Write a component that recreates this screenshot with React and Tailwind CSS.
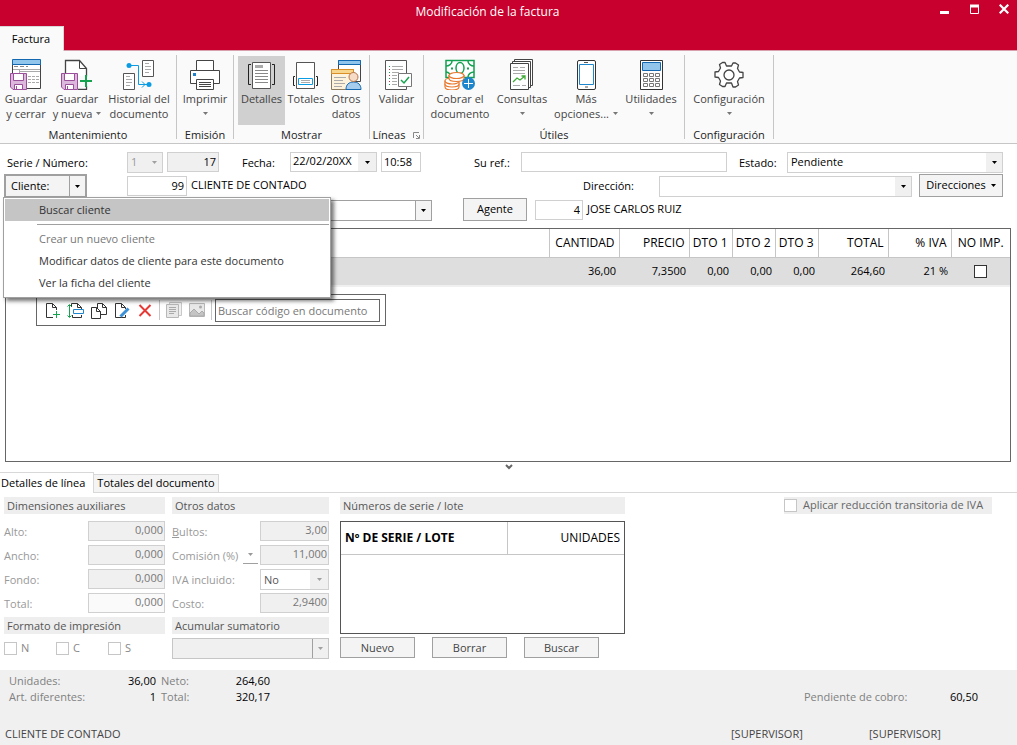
import { useState } from 'react'

/* ---------- shared bits ---------- */

function Caret({ className = 'text-black' }) {
  return (
    <svg className={`w-[5px] h-[3px] shrink-0 ${className}`} viewBox="0 0 5 3" fill="currentColor" aria-hidden="true">
      <path d="M0 0h5L2.5 3z" />
    </svg>
  )
}

function Combo({ label, options = [''], disabled, className = '', caretClass = 'w-4 bg-[#f0f0f0]', selectClass = '' }) {
  return (
    <div className={`relative flex border ${className}`}>
      <select aria-label={label} disabled={disabled}
        className={`flex-1 min-w-0 appearance-none bg-transparent pl-[3px] pr-4 outline-none opacity-100 ${selectClass}`}>
        {options.map((o) => <option key={o}>{o}</option>)}
      </select>
      <span className={`pointer-events-none absolute inset-y-0 right-0 flex items-center justify-center ${caretClass}`}>
        <Caret className={disabled ? 'text-[#a0a0a0]' : 'text-black'} />
      </span>
    </div>
  )
}

function Field({ label, value, className = '', ...rest }) {
  return (
    <input aria-label={label} defaultValue={value}
      className={`h-5 min-w-0 border border-[#d0d0d0] pb-[2px] outline-none ${className}`} {...rest} />
  )
}

/* ---------- ribbon icons ---------- */

function Icon({ children }) {
  return (
    <svg className="w-8 h-8 shrink-0" viewBox="0 0 32 32" fill="none" stroke="#444" aria-hidden="true">
      {children}
    </svg>
  )
}

function Disk() {
  return (
    <g stroke="#9b4f9b">
      <path d="M.5 15.5h16v16H3l-2.500-2.500z" fill="#dcb8dc" />
      <path d="M3.500 15.500h10v7h-10z" fill="#fff" />
      <path d="M4.500 31.500v-5h8v5z" fill="#fff" />
      <path d="M6.500 28v3" />
    </g>
  )
}

const icons = {
  saveClose: (
    <Icon>
      <path d="M2.500 6v24.500h28V6" fill="#fff" />
      <path d="M2.500 1.500h28v5h-28z" fill="#92c5ec" stroke="#1368b0" />
      <path d="M4 8.500h4m2 0h4m2 0h2" stroke="#888" />
      <path d="M3 11.500h27M9.500 11v4M9.500 13.500H30" stroke="#aaa" />
      <path d="M18 18.500h11M18 21.500h11M18 24.500h11" stroke="#aaa" strokeDasharray="3 1" />
      <Disk />
    </Icon>
  ),
  saveNew: (
    <Icon>
      <path d="M4.500 16V2.500h14l7 8v8M25.500 28v3.500H17" fill="#fff" strokeWidth="1.300" />
      <path d="M18.500 2.500v8h7" />
      <Disk />
      <path d="M25 17v12M19 23h12" stroke="#16a34f" strokeWidth="2" />
    </Icon>
  ),
  history: (
    <Icon>
      <path d="M19.500 2.500h11v16h-11zM.5 15.500h11v16H.5z" fill="#fff" stroke="#555" />
      <path d="M22 5.500h4m-4 3h6m-6 3h6m-6 3h4M3 18.500h4m-4 3h6m-6 3h6m-6 3h4" stroke="#aaa" />
      <path d="M6 7.500h9.500v19H25M19 23.500l3 3-3 3" stroke="#0c9ce4" />
      <circle cx="6" cy="7.500" r="2.500" fill="#0c9ce4" stroke="none" />
      <circle cx="26" cy="26.500" r="2.500" fill="#0c9ce4" stroke="none" />
    </Icon>
  ),
  print: (
    <Icon>
      <path d="M7.500 2.500h17v11h-17z" fill="#fff" />
      <path d="M1.500 12.500h29v13h-29z" fill="#fff" />
      <path d="M4 15h3v3H4z" fill="#1e7fcb" stroke="none" />
      <path d="M7.500 21.500h17v10h-17z" fill="#fff" />
      <path d="M10 24.500h12m-12 2h12m-12 2h12" />
    </Icon>
  ),
  details: (
    <Icon>
      <path d="M6.500 4.500h18v26h-18z" fill="#fff" stroke="#555" />
      <path d="M5 6.500H2.500v20H5M26 6.500h2.500v20H26" stroke="#222" />
      <path d="M9 7h8v3H9z" fill="#aaa" stroke="none" />
      <path d="M9 12.500h13m-13 3h13m-13 3h13m-13 3h13m-13 3h13" stroke="#888" />
    </Icon>
  ),
  totals: (
    <Icon>
      <path d="M6.500 4.500h18v26h-18z" fill="#fff" stroke="#555" />
      <path d="M5 18.500H3.500v9H5M26 18.500h1.500v9H26" stroke="#222" />
      <path d="M8.500 20.500h14v6h-14z" stroke="#0c9ce4" />
      <path d="M11 22.500h9m-9 2h9" stroke="#aaa" />
    </Icon>
  ),
  other: (
    <Icon>
      <path d="M8.500 2.500h22v21h-22z" fill="#fff" />
      <path d="M8.500 2.500h22v4h-22z" fill="#92c5ec" stroke="#1368b0" />
      <path d="M1.500 11.500h22v20h-22z" fill="#fdf3dc" stroke="#8a7a60" />
      <path d="M1.500 11.500h22v4h-22z" fill="#f7d58a" stroke="#d98e28" />
      <path d="M4 19.500h12m-12 3h9m-9 3h11m-11 3h8" stroke="#aaa" />
      <path d="M16 31.500c0-5 3-7.500 7.500-7.500s7.500 2.500 7.500 7.500z" fill="#a6cdee" stroke="#1368b0" />
      <circle cx="23.500" cy="19" r="4.500" fill="#f6dcc6" stroke="#b5734a" />
    </Icon>
  ),
  validate: (
    <Icon>
      <path d="M4.500 2.500h21v29h-21z" fill="#fff" stroke="#555" />
      <path d="M11 8.500h11m-11 3h11m-11 3h7m-7 3h5m-5 3h5m-5 3h5m-5 3h5" stroke="#aaa" />
      <path d="M8.500 8v1m0 5v1m0 5v1m0 5v1" stroke="#16a34f" />
      <path d="M8.500 11v1m0 5v1m0 5v1" stroke="#d03050" />
      <path d="M17.500 15.500h13v13h-13z" fill="#fff" stroke="#777" />
      <path d="M20 22l3 3 5-6" stroke="#16a34f" strokeWidth="1.500" />
    </Icon>
  ),
  charge: (
    <Icon>
      <path d="M2 2.500h28v17H2z" fill="#fff" stroke="#13a050" strokeWidth="1.500" />
      <path d="M2 8c3 0 6-2 6-5M30 8c-3 0-6-2-6-5M30 14c-3 0-6 2-6 5M2 14c2 0 3 1 4 2" stroke="#13a050" strokeWidth="1.500" />
      <ellipse cx="16" cy="10" rx="4" ry="5.500" stroke="#13a050" strokeWidth="1.500" />
      <path d="M7 10.500h2m14 0h2" stroke="#13a050" strokeWidth="2" />
      <g fill="#fff" stroke="#e8782f" strokeWidth="1.200">
        <path d="M1 26v3c0 2 3 3 7 3s7-1 7-3v-3z" />
        <path d="M1 23v3c0 2 3 3 7 3s7-1 7-3v-3z" />
        <ellipse cx="8" cy="23" rx="7" ry="3" />
        <path d="M5 17.500v3c0 2 3 3 7.500 3s7.500-1 7.500-3v-3z" />
        <ellipse cx="12.500" cy="17.500" rx="7.500" ry="3" />
      </g>
      <circle cx="24.500" cy="25.500" r="6.500" fill="#1e86cc" stroke="none" />
      <path d="M24.500 21v9M20 25.500h9" stroke="#fff" />
    </Icon>
  ),
  queries: (
    <Icon>
      <path d="M8.500 1.500h18v26h-18z" fill="#fff" />
      <path d="M6.500 3.500h18v26h-18z" fill="#fff" />
      <path d="M4.500 5.500h18v26h-18z" fill="#fff" />
      <path d="M7 9.500h5m2 0h5M7 12.500h12M7 15.500h12M7 27.500h7m2 0h4" stroke="#aaa" />
      <path d="M7 24l4-4 3 2 5-4M15.500 18H19v3.500" stroke="#3faa36" strokeWidth="1.300" />
    </Icon>
  ),
  phone: (
    <Icon>
      <rect x="7.500" y="2.500" width="18" height="29" rx="1.500" fill="#fff" stroke="#333" />
      <path d="M9.500 6.500h14v20h-14z" stroke="#1e86cc" />
      <path d="M14 4.500h4M15 29h3" stroke="#555" />
    </Icon>
  ),
  calc: (
    <Icon>
      <path d="M5.500 2.500h22v29h-22z" fill="#fff" stroke="#333" />
      <path d="M7.500 4.500h18v8h-18z" fill="#92c5ec" stroke="#1368b0" />
      <path d="M8.500 15.500h4v3h-4zM14.500 15.500h4v3h-4zM20.500 15.500h4v3h-4zM8.500 20.500h4v3h-4zM14.500 20.500h4v3h-4zM20.500 20.500h4v3h-4zM8.500 25.500h4v3h-4zM14.500 25.500h4v3h-4zM20.500 25.500h4v3h-4z" stroke="#777" />
    </Icon>
  ),
  gear: (
    <Icon>
      <path
        d="M13.500 8l-1.500-3.500h-2.500L6.500 6.500l1 3.500-2 3.500-3.500.5v5l3.500.5 2 3.500-1 3.500 3 2H12l1.500-3.500h5L20 29h2.500l3-2-1-3.500 2-3.500 3.500-.5v-5l-3.500-.5-2-3.500 1-3.500-3-2H20L18.500 8z"
        fill="#fff" strokeWidth="1.300" strokeLinejoin="round" />
      <circle cx="16" cy="17" r="5" strokeWidth="1.300" />
    </Icon>
  ),
}

/* ---------- ribbon ---------- */

const groups = [
  { name: 'Mantenimiento', box: 'w-[176px]', items: [
    { icon: 'saveClose', lines: ['Guardar', 'y cerrar'], w: 'w-[50px]' },
    { icon: 'saveNew', lines: ['Guardar', 'y nueva'], caret: true, w: 'w-[52px]' },
    { icon: 'history', lines: ['Historial del', 'documento'], w: 'w-[72px]' },
  ] },
  { name: 'Emisión', box: 'w-[56px]', items: [
    { icon: 'print', lines: ['Imprimir', ''], caret: true, w: 'w-[54px]' },
  ] },
  { name: 'Mostrar', box: 'w-[135px]', items: [
    { icon: 'details', lines: ['Detalles'], active: true, w: 'w-[47px]' },
    { icon: 'totals', lines: ['Totales'], w: 'w-[42px]' },
    { icon: 'other', lines: ['Otros', 'datos'], w: 'w-[38px]' },
  ] },
  { name: 'Líneas', box: 'w-[53px]', launcher: true, items: [
    { icon: 'validate', lines: ['Validar'], w: 'w-[50px]' },
  ] },
  { name: 'Útiles', box: 'w-[260px]', items: [
    { icon: 'charge', lines: ['Cobrar el', 'documento'], w: 'w-[66px]' },
    { icon: 'queries', lines: ['Consultas', ''], caret: true, w: 'w-[58px]' },
    { icon: 'phone', lines: ['Más', 'opciones...'], caret: true, w: 'w-[70px]' },
    { icon: 'calc', lines: ['Utilidades', ''], caret: true, w: 'w-[60px]' },
  ] },
  { name: 'Configuración', box: 'w-[88px]', items: [
    { icon: 'gear', lines: ['Configuración', ''], caret: true, w: 'w-[80px]' },
  ] },
]

function RibbonButton({ icon, lines, caret, active, w }) {
  return (
    <button className={`flex flex-col items-center h-[69px] pt-[2px] whitespace-nowrap text-[#444] leading-[15px] ${w} ${active ? 'bg-[#d0d0d0]' : ''}`}>
      {icons[icon]}
      <span className="mt-px">{lines[0]}</span>
      {lines.length > 1 && (
        <span className="flex items-center gap-1 h-[15px]">
          {lines[1]}
          {caret && <Caret className="text-[#777]" />}
        </span>
      )}
    </button>
  )
}

function Ribbon() {
  return (
    <div className="flex h-[93px] bg-[#fafafa] border-b border-[#c6c6c6] overflow-hidden">
      {groups.map((g) => (
        <div key={g.name} className="flex shrink-0">
          <section className={`flex flex-col items-center pt-[5px] ${g.box}`}>
            <div className="flex justify-center">
              {g.items.map((it) => <RibbonButton key={it.icon} {...it} />)}
            </div>
            <h2 className="flex items-center gap-2 mt-[2px] leading-4 text-[#222] whitespace-nowrap">
              {g.name}
              {g.launcher && (
                <svg className="w-[7px] h-[7px]" viewBox="0 0 7 7" fill="none" stroke="#888" aria-hidden="true">
                  <path d="M.5 6V.5H6M3 3l3 3M6.500 3v3.500H3" />
                </svg>
              )}
            </h2>
          </section>
          <div className="w-px my-1 bg-[#c6c6c6]" />
        </div>
      ))}
    </div>
  )
}

/* ---------- title bar ---------- */

function TitleBar() {
  return (
    <header className="bg-[#c8002d]">
      <div className="relative h-[26px] flex items-center justify-end text-white">
        <h1 className="absolute inset-x-0 top-1 text-center leading-4 pr-[42px] text-xs">Modificación de la factura</h1>
        <div className="relative flex gap-[20px] pr-2 pb-2">
          <button aria-label="Minimizar">
            <svg className="w-[10px] h-[10px]" viewBox="0 0 10 10" fill="currentColor"><path d="M1 7h9v3H1z" /></svg>
          </button>
          <button aria-label="Maximizar">
            <svg className="w-[10px] h-[10px]" viewBox="0 0 10 10" fill="none" stroke="currentColor"><path d="M1.500 1.500h8v8h-8z" /><path d="M1 2h9" strokeWidth="3" /></svg>
          </button>
          <button aria-label="Cerrar">
            <svg className="w-[10px] h-[10px]" viewBox="0 0 10 10" fill="none" stroke="currentColor" strokeWidth="2.200"><path d="M.7.7l8.600 8.600M9.300.7L.7 9.300" /></svg>
          </button>
        </div>
      </div>
      <nav className="flex">
        <button className="h-[25px] w-16 bg-[#fafafa] border-t border-r border-[#d8d8d8] pr-px text-black">Factura</button>
        <div className="flex-1 border-b border-[#d8a0ac]" />
      </nav>
    </header>
  )
}

/* ---------- invoice header form ---------- */

const menuItems = [
  { text: 'Crear un nuevo cliente', color: 'text-[#777]' },
  { text: 'Modificar datos de cliente para este documento', color: 'text-[#333]' },
  { text: 'Ver la ficha del cliente', color: 'text-[#333]' },
]

function ClientMenu() {
  return (
    <div role="menu" className="absolute left-[-1px] top-[23px] z-20 w-[328px] border border-[#a0a0a0] bg-white p-px pb-[3px] shadow-[3px_3px_4px_rgba(0,0,0,0.55)]">
      <button role="menuitem" type="button" className="block w-full h-[22px] pl-[34px] text-left bg-[#c5c5c5] text-[#333]">Buscar cliente</button>
      <div className="ml-[32px] my-[3px] border-t border-[#a0a0a0]" />
      {menuItems.map((m) => (
        <button key={m.text} role="menuitem" type="button" className={`block w-full h-[22px] pl-[34px] text-left ${m.color}`}>{m.text}</button>
      ))}
    </div>
  )
}

function HeaderForm() {
  const [open, setOpen] = useState(true)
  return (
    <form className="flex flex-col pl-1 pr-[14px] pt-2 text-black">
      <div className="flex items-start">
        <label className="w-[123px] pl-[3px] leading-[22px]" htmlFor="numero">Serie / Número:</label>
        <Combo label="Serie" options={['1']} disabled className="w-9 h-[21px] border-[#d0d0d0] bg-[#f0f0f0] text-[#999]" caretClass="w-4" />
        <Field id="numero" label="Número" value="17" className="ml-1 w-[52px] px-[2px] text-right bg-[#f0f0f0]" />
        <label className="ml-[23px] w-12 leading-[22px]" htmlFor="fecha">Fecha:</label>
        <div className="flex h-5 w-[87px] border border-[#d0d0d0]">
          <input id="fecha" defaultValue="22/02/20XX" className="min-w-0 flex-1 pl-[2px] pb-[2px] outline-none" />
          <button type="button" aria-label="Abrir calendario" className="w-[18px] bg-[#f0f0f0] flex items-center justify-center"><Caret /></button>
        </div>
        <Field label="Hora" value="10:58" className="ml-1 w-10 px-[2px]" />
        <label className="ml-[53px] w-[47px] leading-[22px]" htmlFor="ref">Su ref.:</label>
        <Field id="ref" label="Su referencia" className="flex-1 px-[2px]" />
        <span className="ml-3 w-12 leading-[22px]">Estado:</span>
        <Combo label="Estado" options={['Pendiente']} className="w-[216px] h-[21px] border-[#d0d0d0]" />
      </div>

      <div className="relative flex items-start">
        <div className="flex w-[83px] h-6 border-2 border-[#a0a0a0] bg-[#f4f4f4]">
          <button type="button" className="flex-1 pl-[5px] text-left">Cliente:</button>
          <button type="button" aria-label="Opciones de cliente" aria-expanded={open} onClick={() => setOpen(!open)}
            className="w-4 border-l border-[#a0a0a0] flex items-center justify-center"><Caret /></button>
        </div>
        {open && <ClientMenu />}
        <Field label="Código de cliente" value="99" className="ml-10 mt-[2px] w-[60px] px-[2px] text-right" />
        <span className="ml-1 leading-[22px]">CLIENTE DE CONTADO</span>
        <span className="ml-auto w-[76px] leading-6">Dirección:</span>
        <Combo label="Dirección" className="mt-[2px] w-[253px] h-[21px] border-[#d0d0d0]" />
        <button type="button" className="ml-[7px] w-[84px] h-[23px] border border-[#a0a0a0] bg-[#f4f4f4] flex items-center justify-center gap-[5px]">
          Direcciones <Caret />
        </button>
      </div>

      <div className="flex items-start">
        <Combo label="Forma de pago" className="mt-[2px] w-[428px] h-[21px] border-[#a0a0a0]" caretClass="w-4 border-l border-[#a0a0a0] bg-[#f4f4f4]" />
        <button type="button" className="ml-[31px] w-16 h-[23px] border border-[#a0a0a0] bg-[#f4f4f4]">Agente</button>
        <Field label="Código de agente" value="4" className="ml-2 mt-[2px] w-12 px-[2px] text-right" />
        <span className="ml-1 leading-[22px]">JOSE CARLOS RUIZ</span>
      </div>
    </form>
  )
}

/* ---------- lines grid ---------- */

const columns = [
  { head: '', value: '', w: '' },
  { head: 'CANTIDAD', value: '36,00', w: 'w-[70px]' },
  { head: 'PRECIO', value: '7,3500', w: 'w-[70px]' },
  { head: 'DTO 1', value: '0,00', w: 'w-[43px]' },
  { head: 'DTO 2', value: '0,00', w: 'w-[43px]' },
  { head: 'DTO 3', value: '0,00', w: 'w-[43px]' },
  { head: 'TOTAL', value: '264,60', w: 'w-[70px]' },
  { head: '% IVA', value: '21 %', w: 'w-[63px]' },
]

function ToolButton({ label, children }) {
  return (
    <button aria-label={label}>
      <svg className="w-[18px] h-[18px]" viewBox="0 0 18 18" fill="none" stroke="#333" aria-hidden="true">{children}</svg>
    </button>
  )
}

function LineToolbar() {
  return (
    <div className="flex items-center gap-[5px] ml-[30px] mt-[7px] w-[350px] h-8 border border-[#666] bg-white pl-[7px]">
      <ToolButton label="Nueva línea">
        <path d="M9 16.500H2.500v-14h6l4 4V9M8.500 2.500v4h4" />
        <path d="M12.500 10v7M9 13.500h7" stroke="#16a34f" />
      </ToolButton>
      <ToolButton label="Insertar línea">
        <path d="M4.500 6V2.500h6l4 4V8M10.500 2.500v4h4M5.500 14v2.500h9V14" />
        <path d="M6.500 8.500h10v4h-10z" stroke="#1e86cc" fill="#fff" />
        <path d="M2.500 4v12M.5 5.500l2-2 2 2M.5 14.500l2 2 2-2" stroke="#16a34f" />
      </ToolButton>
      <ToolButton label="Duplicar línea">
        <path d="M7.500 7V2.500h5l4 4v7H11M12.500 2.500v4h4" />
        <path d="M1.500 6.500h5l4 4v7h-9zM6.500 6.500v4h4" fill="#fff" />
      </ToolButton>
      <ToolButton label="Modificar línea">
        <path d="M12.500 14v2.500h-10v-14h6l4 4V8M8.500 2.500v4h4" />
        <path d="M7.500 15.500l8-8" stroke="#3a8fd6" strokeWidth="3" />
      </ToolButton>
      <ToolButton label="Eliminar línea">
        <path d="M3.500 4l11 11M14.500 4l-11 11" stroke="#e53935" strokeWidth="2" />
      </ToolButton>
      <div className="w-px h-5 bg-[#c6c6c6]" />
      <ToolButton label="Detalle">
        <path d="M4.500 1.500h12v13h-12z" stroke="#c8c8c8" fill="#f0f0f0" />
        <path d="M1.500 3.500h12v13h-12z" stroke="#b8b8b8" fill="#e8e8e8" />
        <path d="M4 6.500h7M4 8.500h7m-7 2h7m-7 2h5" stroke="#aaa" />
      </ToolButton>
      <ToolButton label="Imagen">
        <path d="M1.500 2.500h15v13h-15z" stroke="#b8b8b8" fill="#e8e8e8" />
        <path d="M2 12l4-4 5 5 3-3 2 2v3H2z" fill="#c4c4c4" stroke="#aaa" />
        <circle cx="12.500" cy="6" r="1.500" fill="#aaa" stroke="none" />
      </ToolButton>
      <div className="w-px h-5 bg-[#c6c6c6]" />
      <input aria-label="Buscar código en documento" placeholder="Buscar código en documento"
        className="ml-[-2px] mr-[5px] flex-1 min-w-0 h-[23px] border border-[#666] pl-[2px] outline-none placeholder:text-[#777]" />
    </div>
  )
}

function LinesGrid() {
  return (
    <section className="ml-[5px] mr-[6px] mt-[7px] flex-1 min-h-[234px] border border-[#666]">
      <table className="w-full table-fixed border-collapse">
        <thead>
          <tr className="h-7 text-xs">
            {columns.map((c) => (
              <th key={c.head} className={`border-r border-b border-[#c6c6c6] p-0 pr-1 text-right font-normal whitespace-nowrap ${c.w}`}>{c.head}</th>
            ))}
            <th className="w-[59px] border-b border-[#c6c6c6] p-0 text-center font-normal whitespace-nowrap">NO IMP.</th>
          </tr>
        </thead>
        <tbody>
          <tr className="h-[29px] bg-[#dedede] border-b-2 border-[#f0f0f0]">
            {columns.map((c) => (
              <td key={c.head} className="p-0 pr-[3px] text-right">{c.value}</td>
            ))}
            <td className="p-0 text-center">
              <input type="checkbox" aria-label="No imprimir" className="appearance-none block mx-auto w-[13px] h-[13px] border border-[#333] bg-white" />
            </td>
          </tr>
        </tbody>
      </table>
      <LineToolbar />
    </section>
  )
}

/* ---------- detail panels ---------- */

function PanelTitle({ children }) {
  return <h3 className="h-[17px] bg-[#eee] pl-[3px] leading-[17px] text-[#555] whitespace-nowrap">{children}</h3>
}

function DetailRow({ label, children }) {
  return (
    <div className="flex items-start justify-between h-6 leading-[22px] text-[#999]">
      <span>{label}</span>
      {children}
    </div>
  )
}

function Tick({ text }) {
  return (
    <label className="flex items-center gap-1 w-[52px] text-[#888]">
      <input type="checkbox" disabled className="appearance-none w-[13px] h-[13px] border border-[#c6c6c6] bg-white" />
      {text}
    </label>
  )
}

function Details() {
  const gray = 'text-right text-[#777] px-px bg-[#f0f0f0]'
  return (
    <section className="flex items-start pl-1 pt-1 pb-[11px]">
      <div className="w-[161px]">
        <PanelTitle>Dimensiones auxiliares</PanelTitle>
        <div className="mt-[7px]">
          {['Alto', 'Ancho', 'Fondo'].map((n) => (
            <DetailRow key={n} label={n + ':'}>
              <Field label={n} value="0,000" disabled className={`w-[77px] ${gray}`} />
            </DetailRow>
          ))}
          <DetailRow label="Total:">
            <Field label="Total" value="0,000" disabled className="w-[77px] text-right text-[#777] px-px bg-[#fafafa]" />
          </DetailRow>
        </div>
        <PanelTitle>Formato de impresión</PanelTitle>
        <div className="flex mt-[6px]">
          <Tick text="N" />
          <Tick text="C" />
          <Tick text="S" />
        </div>
      </div>

      <div className="ml-[7px] w-[157px]">
        <PanelTitle>Otros datos</PanelTitle>
        <div className="mt-[7px]">
          <DetailRow label={<><u>B</u>ultos:</>}>
            <Field label="Bultos" value="3,00" disabled className={`w-[69px] ${gray}`} />
          </DetailRow>
          <DetailRow label="Comisión (%)">
            <button aria-label="Tipo de comisión" className="ml-auto mr-[2px] w-[15px] h-[19px] border-b border-[#a0a0a0] flex items-center justify-center">
              <Caret className="text-[#999]" />
            </button>
            <Field label="Comisión" value="11,000" disabled className={`w-[69px] ${gray}`} />
          </DetailRow>
          <DetailRow label="IVA incluido:">
            <Combo label="IVA incluido" options={['No']} disabled className="w-[69px] h-[21px] border-[#d0d0d0] text-[#555] leading-4" caretClass="w-[18px] bg-[#f0f0f0]" />
          </DetailRow>
          <DetailRow label="Costo:">
            <Field label="Costo" value="2,9400" disabled className={`w-[69px] ${gray}`} />
          </DetailRow>
        </div>
        <PanelTitle>Acumular sumatorio</PanelTitle>
        <Combo label="Acumular sumatorio" disabled className="mt-1 w-full h-[21px] border-[#c6c6c6] bg-[#f0f0f0]" caretClass="w-4 border-l border-[#a0a0a0]" />
      </div>

      <div className="ml-[11px] w-[285px]">
        <PanelTitle>Números de serie / lote</PanelTitle>
        <div className="mt-[7px] h-[113px] border border-[#555]">
          <table className="w-full table-fixed border-collapse text-xs text-black">
            <thead>
              <tr className="h-8 border-b border-[#c6c6c6]">
                <th className="w-[166px] border-r border-[#c6c6c6] p-0 pl-1 text-left font-bold">Nº DE SERIE / LOTE</th>
                <th className="p-0 pr-1 text-right font-normal">UNIDADES</th>
              </tr>
            </thead>
          </table>
        </div>
        <div className="flex gap-[17px] mt-[3px] text-[#444]">
          {['Nuevo', 'Borrar', 'Buscar'].map((t) => (
            <button key={t} className="w-[75px] h-[21px] border border-[#a0a0a0] bg-[#f4f4f4] pt-[2px]">{t}</button>
          ))}
        </div>
      </div>

      <label className="ml-auto mr-[25px] flex items-center w-[208px] h-[17px] bg-[#eee] text-[#666] whitespace-nowrap">
        <input type="checkbox" disabled className="appearance-none w-[13px] h-[13px] border border-[#c6c6c6] bg-white mr-[6px]" />
        Aplicar reducción transitoria de IVA
      </label>
    </section>
  )
}

/* ---------- status area ---------- */

function Footer() {
  return (
    <footer className="bg-[#f0f0f0] pt-[3px] text-[#808080]">
      <div className="flex items-end justify-between leading-4">
        <dl className="grid grid-cols-[95px_47px_40px_64px] gap-x-[5px] pl-[9px]">
          <dt>Unidades:</dt>
          <dd className="text-right text-black">36,00</dd>
          <dt>Neto:</dt>
          <dd className="text-right text-black">264,60</dd>
          <dt>Art. diferentes:</dt>
          <dd className="text-right text-black">1</dd>
          <dt>Total:</dt>
          <dd className="text-right text-black">320,17</dd>
        </dl>
        <dl className="flex pr-[39px]">
          <dt className="w-[146px]">Pendiente de cobro:</dt>
          <dd className="text-black">60,50</dd>
        </dl>
      </div>
      <div className="flex mt-[21px] pb-[3px] pl-[5px] leading-4 text-[#444]">
        <span className="flex-1">CLIENTE DE CONTADO</span>
        <span className="w-[138px]">[SUPERVISOR]</span>
        <span className="w-[148px]">[SUPERVISOR]</span>
      </div>
    </footer>
  )
}

export default function App() {
  return (
    <div className="min-h-screen flex flex-col bg-white font-['Open_Sans','Noto_Sans',sans-serif] text-[11px] text-black">
      <TitleBar />
      <Ribbon />
      <HeaderForm />
      <LinesGrid />
      <div className="flex justify-center h-[10px]">
        <svg className="w-2 h-2 mt-px" viewBox="0 0 8 8" fill="none" stroke="#666" strokeWidth="2" aria-hidden="true"><path d="M1 2l3 3 3-3" /></svg>
      </div>
      <nav className="flex items-end h-[21px]">
        <button className="h-[21px] w-[94px] border-t border-r border-[#d8d8d8] text-left pl-px whitespace-nowrap">Detalles de línea</button>
        <button className="h-[19px] w-[125px] border border-l-0 border-[#d8d8d8] bg-[#f4f4f4] whitespace-nowrap">Totales del documento</button>
        <div className="flex-1 self-stretch border-b border-[#d8d8d8]" />
      </nav>
      <Details />
      <Footer />
    </div>
  )
}
